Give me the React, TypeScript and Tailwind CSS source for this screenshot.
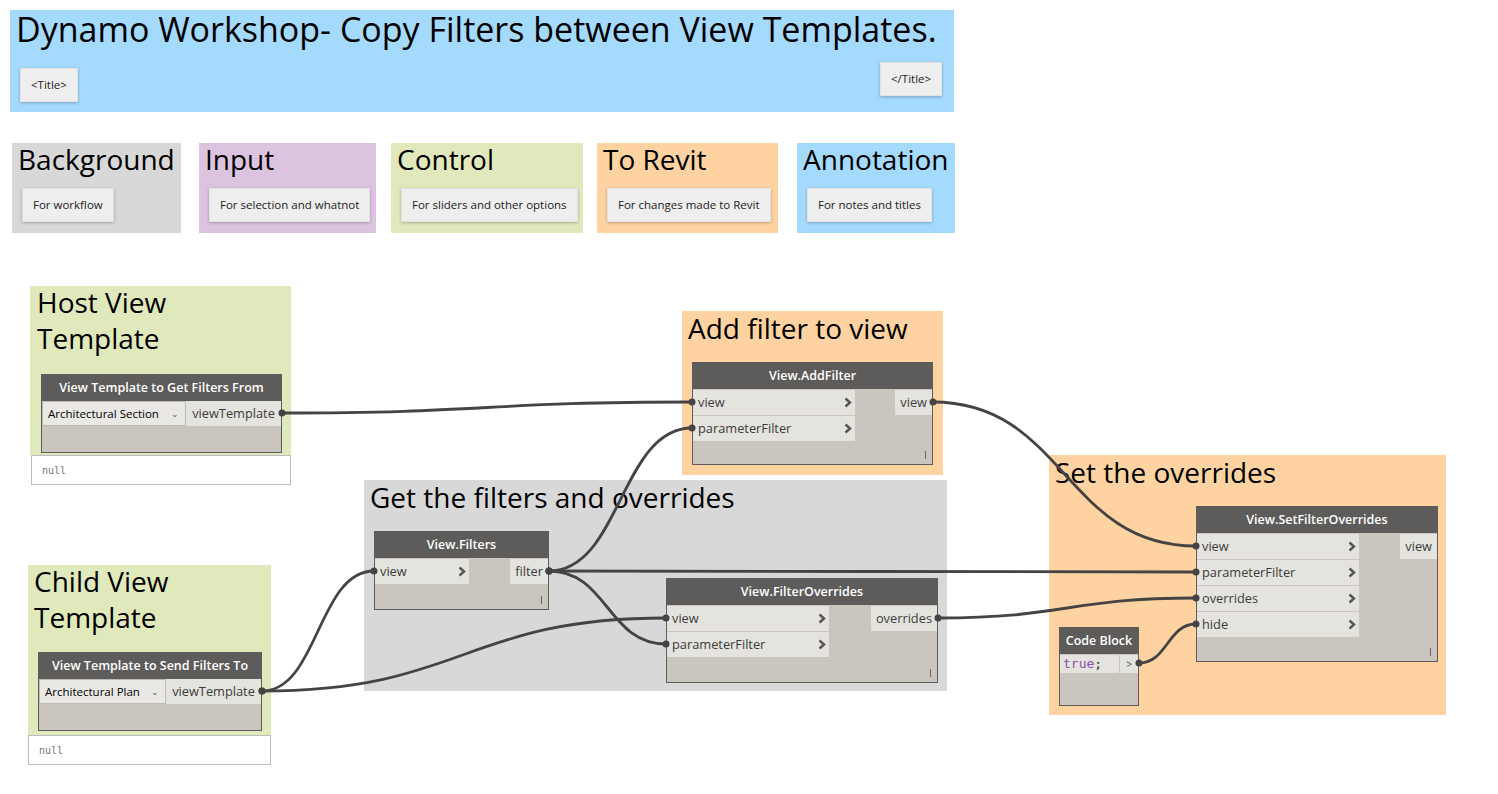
import React from "react";

const FONT = { fontFamily: '"Open Sans", "Noto Sans", sans-serif' };

function Chevron() {
  return (
    <svg width="8" height="11" viewBox="0 0 8 11" className="shrink-0">
      <path d="M1.5 1.5 L6 5.5 L1.5 9.5" fill="none" stroke="#555" strokeWidth="2.4" strokeLinejoin="miter" />
    </svg>
  );
}

function Tick() {
  return <div className="w-[1px] h-[8px] bg-[#666]" />;
}

type NodeProps = {
  pos: string;
  title: string;
  inputs: string[];
  outputs: string[];
  inW: string;
  bottomH: string;
};

function Node({ pos, title, inputs, outputs, inW, bottomH }: NodeProps) {
  return (
    <div className={`absolute border border-[#5E5C5A] bg-[#CAC5BE] ${pos}`}>
      <div className="h-[26px] bg-[#5E5C5A] text-white text-[12.5px] font-semibold flex items-center justify-center">
        {title}
      </div>
      <div className="flex justify-between pt-[1px]">
        <div className={`flex flex-col gap-[1px] ${inW}`}>
          {inputs.map((n) => (
            <div
              key={n}
              className="h-[25px] bg-[#E5E3DE] flex items-center justify-between pl-[5px] pr-[3px] text-[12.8px] text-[#3c3c3c]"
            >
              <span>{n}</span>
              <Chevron />
            </div>
          ))}
        </div>
        <div className="flex flex-col">
          {outputs.map((n) => (
            <div
              key={n}
              className="h-[25px] bg-[#E5E3DE] flex items-center px-[5px] text-[12.8px] text-[#3c3c3c]"
            >
              {n}
            </div>
          ))}
        </div>
      </div>
      <div className={`flex items-end justify-end pr-[6px] pb-[5px] ${bottomH}`}>
        <Tick />
      </div>
    </div>
  );
}

function SelNode({
  pos,
  title,
  value,
  selW,
}: {
  pos: string;
  title: string;
  value: string;
  selW: string;
}) {
  return (
    <div className={`absolute border border-[#5E5C5A] bg-[#CAC5BE] ${pos}`}>
      <div className="h-[26px] bg-[#5E5C5A] text-white text-[12.5px] font-semibold flex items-center justify-center">
        {title}
      </div>
      <div className="flex h-[25px]">
        <div
          className={`h-full bg-[#EAE8E5] border border-[#BDBAB5] flex items-center justify-between pl-[5px] pr-[6px] text-[11.5px] text-black ${selW}`}
        >
          <span>{value}</span>
          <span className="text-[9px] text-[#555]">&#8964;</span>
        </div>
        <div className="flex-1 h-full bg-[#E5E3DE] flex items-center justify-center text-[12.8px] text-[#3c3c3c]">
          viewTemplate
        </div>
      </div>
      <div className="h-[26px]" />
    </div>
  );
}

function NullBox({ pos }: { pos: string }) {
  return (
    <div
      className={`absolute bg-white border border-[#BDBDBD] flex items-center pl-[10px] text-[10px] text-[#777] ${pos}`}
      style={{ fontFamily: '"DejaVu Sans Mono", monospace' }}
    >
      null
    </div>
  );
}

function Btn({ children }: { children: React.ReactNode }) {
  return (
    <div className="h-[34px] px-[10px] bg-[#EEEEEE] border border-[#E2E2E2] shadow-[0_1px_3px_rgba(0,0,0,0.25)] flex items-center text-[11.5px] text-[#222] whitespace-nowrap">
      {children}
    </div>
  );
}

function Legend({ pos, bg, title, note }: { pos: string; bg: string; title: string; note: string }) {
  return (
    <div className={`absolute h-[90px] flex flex-col ${pos} ${bg}`}>
      <div className="pl-[6px] h-[37px] flex items-center text-[28px] text-black leading-none pb-[6px]">{title}</div>
      <div className="pl-[10px] pt-[8px] flex">
        <Btn>{note}</Btn>
      </div>
    </div>
  );
}

function bez(x1: number, y1: number, x2: number, y2: number) {
  const dx = (x2 - x1) * 0.5;
  return `M ${x1} ${y1} C ${x1 + dx} ${y1}, ${x2 - dx} ${y2}, ${x2} ${y2}`;
}

const wires: [number, number, number, number][] = [
  [282, 413, 692, 402],
  [549, 571, 692, 428],
  [549, 571, 1196, 572],
  [549, 571, 666, 644],
  [262, 691, 374, 571],
  [262, 691, 666, 618],
  [933, 402, 1196, 546],
  [938, 618, 1196, 598],
  [1139, 663, 1196, 624],
];

export default function App() {
  return (
    <div className="relative w-[1498px] h-[794px] bg-white overflow-hidden" style={FONT}>
      {/* Title group */}
      <div className="absolute left-[10px] top-[10px] w-[944px] h-[102px] bg-[#A4DAFD]">
        <div className="absolute left-[6px] top-[-2px] text-[34px] leading-[42px] text-black whitespace-nowrap">
          Dynamo Workshop- Copy Filters between View Templates.
        </div>
        <div className="absolute left-[10px] top-[58px]">
          <Btn>&lt;Title&gt;</Btn>
        </div>
        <div className="absolute left-[870px] top-[52px]">
          <Btn>&lt;/Title&gt;</Btn>
        </div>
      </div>

      {/* Legend */}
      <Legend pos="left-[12px] top-[143px] w-[169px]" bg="bg-[#D8D8D8]" title="Background" note="For workflow" />
      <Legend pos="left-[199px] top-[143px] w-[177px]" bg="bg-[#DCC3E0]" title="Input" note="For selection and whatnot" />
      <Legend pos="left-[391px] top-[143px] w-[192px]" bg="bg-[#E0E9BB]" title="Control" note="For sliders and other options" />
      <Legend pos="left-[597px] top-[143px] w-[181px]" bg="bg-[#FFD3A1]" title="To Revit" note="For changes made to Revit" />
      <Legend pos="left-[797px] top-[143px] w-[158px]" bg="bg-[#A4DAFD]" title="Annotation" note="For notes and titles" />

      {/* Groups */}
      <div className="absolute left-[30px] top-[286px] w-[261px] h-[169px] bg-[#E0E9BB]">
        <div className="pl-[7px] text-[28px] leading-[36px] text-black -mt-[2px]">
          Host View
          <br />
          Template
        </div>
      </div>
      <div className="absolute left-[28px] top-[565px] w-[243px] h-[170px] bg-[#E0E9BB]">
        <div className="pl-[6px] text-[28px] leading-[36px] text-black -mt-[2px]">
          Child View
          <br />
          Template
        </div>
      </div>
      <div className="absolute left-[682px] top-[311px] w-[261px] h-[164px] bg-[#FFD3A1]">
        <div className="pl-[6px] text-[28px] leading-[34px] text-black whitespace-nowrap">Add filter to view</div>
      </div>
      <div className="absolute left-[364px] top-[480px] w-[583px] h-[211px] bg-[#D8D8D8]">
        <div className="pl-[6px] text-[28px] leading-[34px] text-black whitespace-nowrap">
          Get the filters and overrides
        </div>
      </div>
      <div className="absolute left-[1049px] top-[455px] w-[397px] h-[260px] bg-[#FFD3A1]">
        <div className="pl-[6px] text-[28px] leading-[34px] text-black whitespace-nowrap">Set the overrides</div>
      </div>

      {/* Nodes */}
      <SelNode
        pos="left-[41px] top-[374px] w-[241px]"
        title="View Template to Get Filters From"
        value="Architectural Section"
        selW="w-[144px]"
      />
      <NullBox pos="left-[31px] top-[455px] w-[260px] h-[30px]" />

      <SelNode
        pos="left-[38px] top-[652px] w-[224px]"
        title="View Template to Send Filters To"
        value="Architectural Plan"
        selW="w-[127px]"
      />
      <NullBox pos="left-[28px] top-[735px] w-[243px] h-[30px]" />

      <Node
        pos="left-[692px] top-[362px] w-[241px]"
        title="View.AddFilter"
        inputs={["view", "parameterFilter"]}
        outputs={["view"]}
        inW="w-[162px]"
        bottomH="h-[23px]"
      />
      <Node
        pos="left-[374px] top-[531px] w-[175px]"
        title="View.Filters"
        inputs={["view"]}
        outputs={["filter"]}
        inW="w-[94px]"
        bottomH="h-[25px]"
      />
      <Node
        pos="left-[666px] top-[578px] w-[272px]"
        title="View.FilterOverrides"
        inputs={["view", "parameterFilter"]}
        outputs={["overrides"]}
        inW="w-[162px]"
        bottomH="h-[25px]"
      />
      <Node
        pos="left-[1196px] top-[506px] w-[242px]"
        title="View.SetFilterOverrides"
        inputs={["view", "parameterFilter", "overrides", "hide"]}
        outputs={["view"]}
        inW="w-[162px]"
        bottomH="h-[24px]"
      />

      {/* Code block */}
      <div className="absolute left-[1059px] top-[627px] w-[80px] h-[79px] border border-[#5E5C5A] bg-[#CAC5BE]">
        <div className="h-[26px] bg-[#5E5C5A] text-white text-[12.5px] font-semibold flex items-center justify-center">
          Code Block
        </div>
        <div className="flex h-[18px] mt-[1px]">
          <div
            className="flex-1 bg-[#E5E3DE] flex items-center pl-[3px] text-[13px]"
            style={{ fontFamily: '"DejaVu Sans Mono", monospace' }}
          >
            <span className="text-[#8A4FB0]">true</span>
            <span className="text-[#222]">;</span>
          </div>
          <div className="w-[19px] bg-[#E5E3DE] border-l border-[#C8C4BE] flex items-center justify-center text-[10px] text-[#444]">
            &gt;
          </div>
        </div>
      </div>

      {/* Wires */}
      <svg className="absolute left-0 top-0 pointer-events-none" width="1498" height="794">
        {wires.map(([a, b, c, d], i) => (
          <path key={i} d={bez(a, b, c, d)} fill="none" stroke="#444" strokeWidth="2.8" />
        ))}
        {wires.map(([a, b, c, d], i) => (
          <g key={"m" + i} fill="#444">
            <circle cx={a} cy={b} r="3.5" />
            <circle cx={c} cy={d} r="3.5" />
          </g>
        ))}
      </svg>
    </div>
  );
}
